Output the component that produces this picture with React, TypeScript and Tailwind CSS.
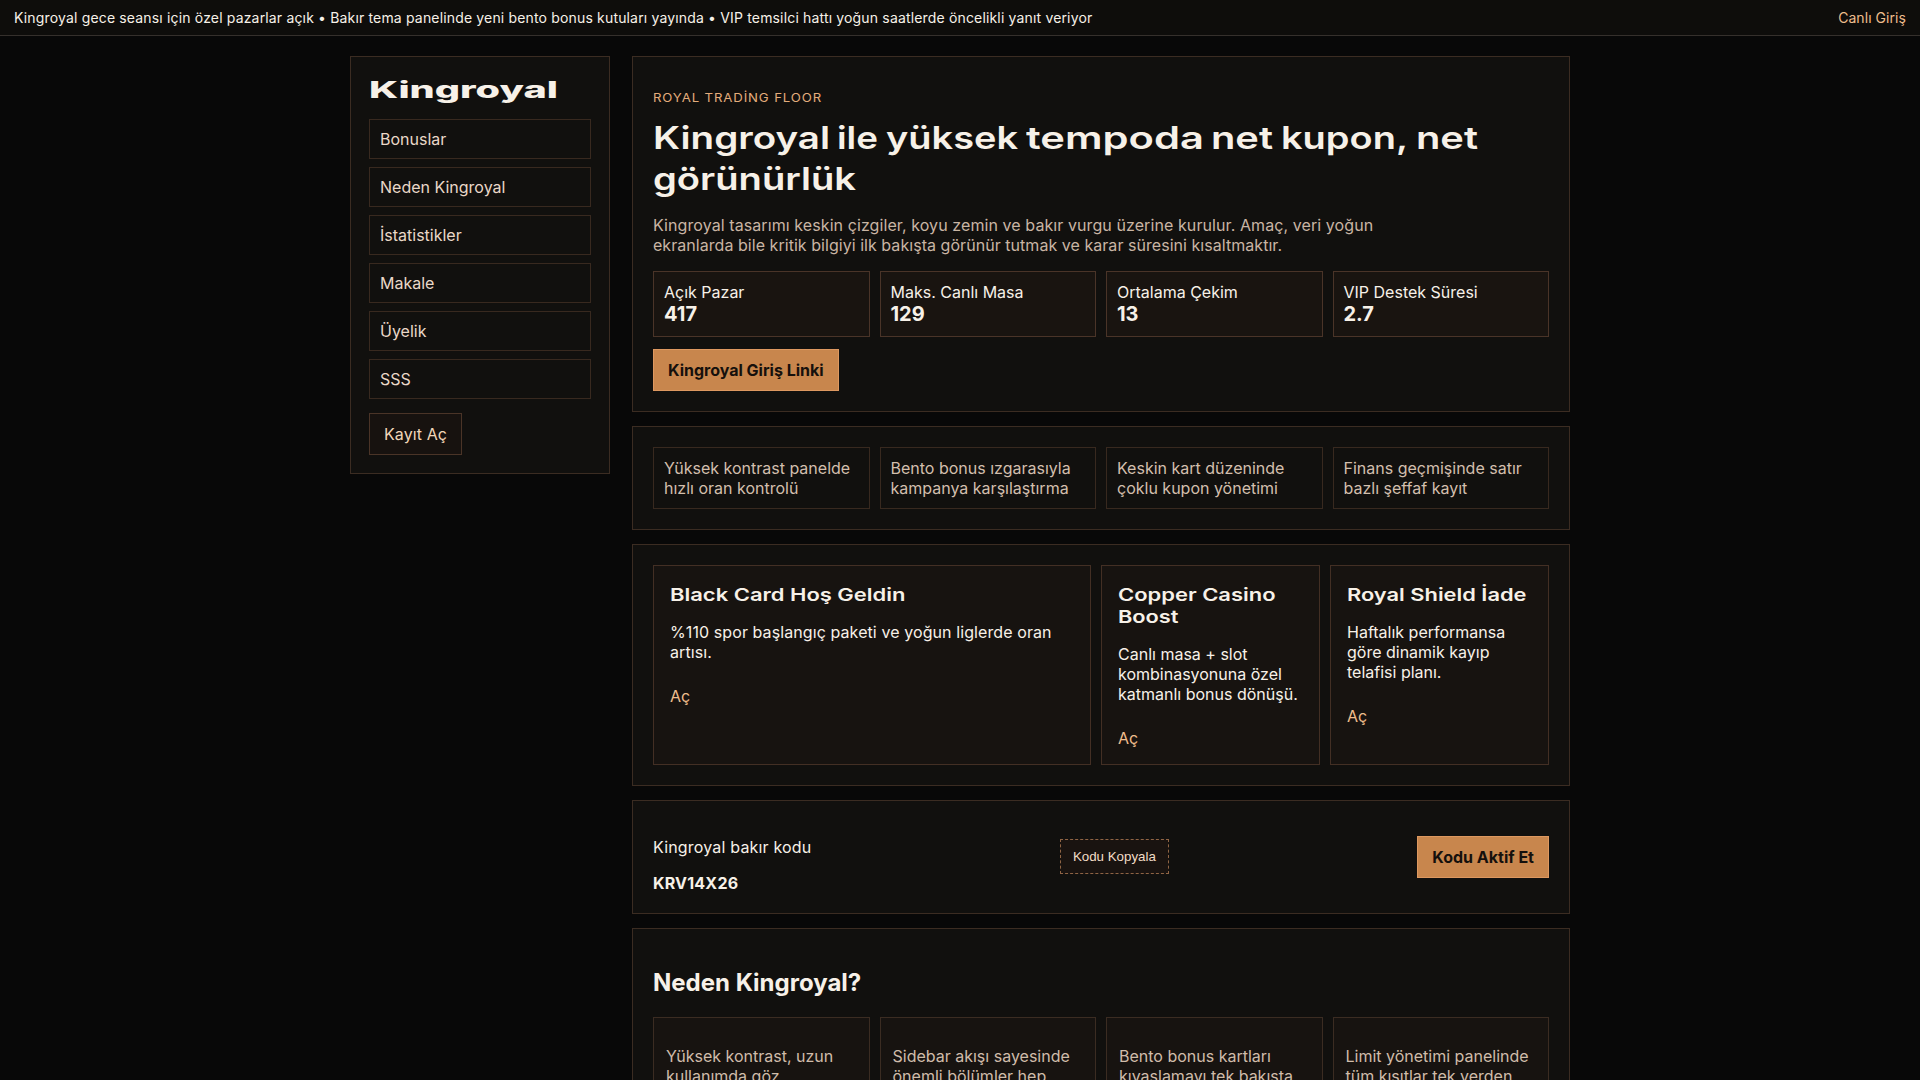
import { useLayoutEffect, useRef } from "react";

/** Display text set in an extended cut: the glyphs are widened until the run is `w` pixels long. */
function Wide({ w, children }: { w: number; children: string }) {
  const ref = useRef<HTMLSpanElement>(null);
  useLayoutEffect(() => {
    const el = ref.current;
    if (!el) return;
    const natural = parseFloat(getComputedStyle(el).width);
    el.style.transform = `scaleX(${w / natural})`;
  }, [w]);
  return (
    <span className="inline-block whitespace-nowrap align-top" style={{ width: w }}>
      <span ref={ref} className="inline-block origin-left align-top">
        {children}
      </span>
    </span>
  );
}

const nav = ["Bonuslar", "Neden Kingroyal", "İstatistikler", "Makale", "Üyelik", "SSS"];

const headline: { t: string; w: number; slot: number }[] = [
  { t: "Kingroyal", w: 177, slot: 184 },
  { t: "ile", w: 41, slot: 49 },
  { t: "yüksek", w: 132, slot: 140 },
  { t: "tempoda", w: 178, slot: 185 },
  { t: "net", w: 62, slot: 70 },
  { t: "kupon,", w: 127, slot: 135 },
  { t: "net", w: 62, slot: 62 },
];

const stats = [
  ["Açık Pazar", "417"],
  ["Maks. Canlı Masa", "129"],
  ["Ortalama Çekim", "13"],
  ["VIP Destek Süresi", "2.7"],
];

const features = [
  "Yüksek kontrast panelde hızlı oran kontrolü",
  "Bento bonus ızgarasıyla kampanya karşılaştırma",
  "Keskin kart düzeninde çoklu kupon yönetimi",
  "Finans geçmişinde satır bazlı şeffaf kayıt",
];

const bonuses: { title: [string, number][]; body: string; bodyClass: string }[] = [
  {
    title: [["Black Card Hoş Geldin", 235.5]],
    body: "%110 spor başlangıç paketi ve yoğun liglerde oran artısı.",
    bodyClass: "mt-4 tracking-[0.09px]",
  },
  {
    title: [
      ["Copper Casino", 157.5],
      ["Boost", 60.5],
    ],
    body: "Canlı masa + slot kombinasyonuna özel katmanlı bonus dönüşü.",
    bodyClass: "mt-4",
  },
  {
    title: [["Royal Shield İade", 179.5]],
    body: "Haftalık performansa göre dinamik kayıp telafisi planı.",
    bodyClass: "mt-4",
  },
];

const reasons = [
  ["Yüksek kontrast, uzun", "kullanımda göz"],
  ["Sidebar akışı sayesinde", "önemli bölümler hep"],
  ["Bento bonus kartları", "kıyaslamayı tek bakışta"],
  ["Limit yönetimi panelinde", "tüm kısıtlar tek yerden"],
];

const panel = "border border-[#3b2c22] bg-[#11100e] p-5";
const copperButton =
  "inline-block border border-[#dd9860] bg-[#c8864d] px-3.5 py-2.5 font-bold whitespace-nowrap text-[#15100c]";

export default function App() {
  return (
    <div className="h-screen overflow-hidden bg-[#080808] font-['Inter',sans-serif] text-[16px] leading-[20px] text-[#f7f1e8]">
      <div className="flex h-9 items-center justify-between border-b border-[#35302c] bg-[#0e0d0b] px-3.5 text-[14px] leading-[17px]">
        <span className="tracking-[0.163px]">
          Kingroyal gece seansı için özel pazarlar açık • Bakır tema panelinde yeni bento bonus kutuları yayında • VIP
          temsilci hattı yoğun saatlerde öncelikli yanıt veriyor
        </span>
        <a className="tracking-[0.06px] text-[#efbd8d]">Canlı Giriş</a>
      </div>

      <div className="mx-auto mt-5 flex w-[1220px] items-start gap-[22px]">
        <aside className="w-[260px] shrink-0 border border-[#3b2c22] bg-[#11100e] p-[18px]">
          <div className="h-11 pt-px text-[22.5px] leading-[28px] font-extrabold">
            <Wide w={189}>Kingroyal</Wide>
          </div>
          <nav className="flex flex-col gap-2">
            {nav.map((n) => (
              <a key={n} className="border border-[#38291f] px-2.5 py-[9px] text-[#ead8c8]">
                {n}
              </a>
            ))}
          </nav>
          <a className="mt-3.5 inline-block border border-[#4a3427] bg-[#17120f] px-3.5 py-2.5 align-top tracking-[0.1px] text-[#f2d7b9]">
            Kayıt Aç
          </a>
        </aside>

        <main className="flex w-[938px] flex-col gap-3.5">
          <section className={panel}>
            <p className="mt-[13px] h-4 text-[12px] leading-4 tracking-[0.8px] text-[#e3ac7b]">
              <Wide w={169}>ROYAL TRADİNG FLOOR</Wide>
            </p>
            <h1 className="mt-[11px] text-[31.5px] leading-[41px] font-semibold">
              <span className="flex">
                {headline.map((h, i) => (
                  <span key={i} style={{ width: h.slot }}>
                    <Wide w={h.w}>{h.t}</Wide>
                  </span>
                ))}
              </span>
              <Wide w={203}>görünürlük</Wide>
            </h1>
            <p className="mt-4 w-[760px] text-[#c9b5a4]">
              <span className="block tracking-[0.085px]">
                Kingroyal tasarımı keskin çizgiler, koyu zemin ve bakır vurgu üzerine kurulur. Amaç, veri yoğun
              </span>
              <span className="block tracking-[0.045px]">
                ekranlarda bile kritik bilgiyi ilk bakışta görünür tutmak ve karar süresini kısaltmaktır.
              </span>
            </p>
            <div className="mt-4 grid grid-cols-4 gap-2.5">
              {stats.map(([label, value]) => (
                <div key={label} className="border border-[#4a3428] bg-[#191410] p-2.5">
                  {label}
                  <strong className="block text-[20px] leading-6 font-bold">{value}</strong>
                </div>
              ))}
            </div>
            <a className={copperButton + " mt-3 align-top"}>Kingroyal Giriş Linki</a>
          </section>

          <section className={panel}>
            <div className="grid grid-cols-4 gap-2.5">
              {features.map((f) => (
                <div key={f} className="border border-[#38291f] p-2.5 text-[#d3bfad]">
                  {f}
                </div>
              ))}
            </div>
          </section>

          <section className={panel}>
            <div className="grid grid-cols-[2fr_1fr_1fr] gap-2.5">
              {bonuses.map((b) => (
                <article key={b.body} className="border border-[#432f24] bg-[#171310] p-4">
                  <h3 className="mt-0.5 text-[17.5px] leading-[22px] font-semibold">
                    {b.title.map(([t, w]) => (
                      <span key={t} className="block">
                        <Wide w={w}>{t}</Wide>
                      </span>
                    ))}
                  </h3>
                  <p className={b.bodyClass}>{b.body}</p>
                  <a className="mt-6 block text-[#efbd8d]">Aç</a>
                </article>
              ))}
            </div>
          </section>

          <section className={panel + " flex items-center justify-between"}>
            <div className="pt-4">
              <p className="tracking-[0.18px]">Kingroyal bakır kodu</p>
              <p className="mt-4 font-bold tracking-[0.2px]">KRV14X26</p>
            </div>
            <button className="mb-px border border-dashed border-[#8f6444] bg-[#191310] px-3 py-[9px] font-['Liberation_Sans',sans-serif] text-[13.333px] leading-[15px] text-[#f2dcc6]">
              Kodu Kopyala
            </button>
            <a className={copperButton}>Kodu Aktif Et</a>
          </section>

          <section className={panel}>
            <h2 className="mt-[19px] text-[24px] leading-[29px] font-bold">Neden Kingroyal?</h2>
            <div className="mt-5 grid grid-cols-4 gap-2.5">
              {reasons.map(([a, b]) => (
                <article key={a} className="border border-[#3b2c22] bg-[#171310] p-3">
                  <p className="my-4 text-[#d0bcaa]">
                    {a}
                    <br />
                    {b}
                  </p>
                </article>
              ))}
            </div>
          </section>
        </main>
      </div>
    </div>
  );
}
